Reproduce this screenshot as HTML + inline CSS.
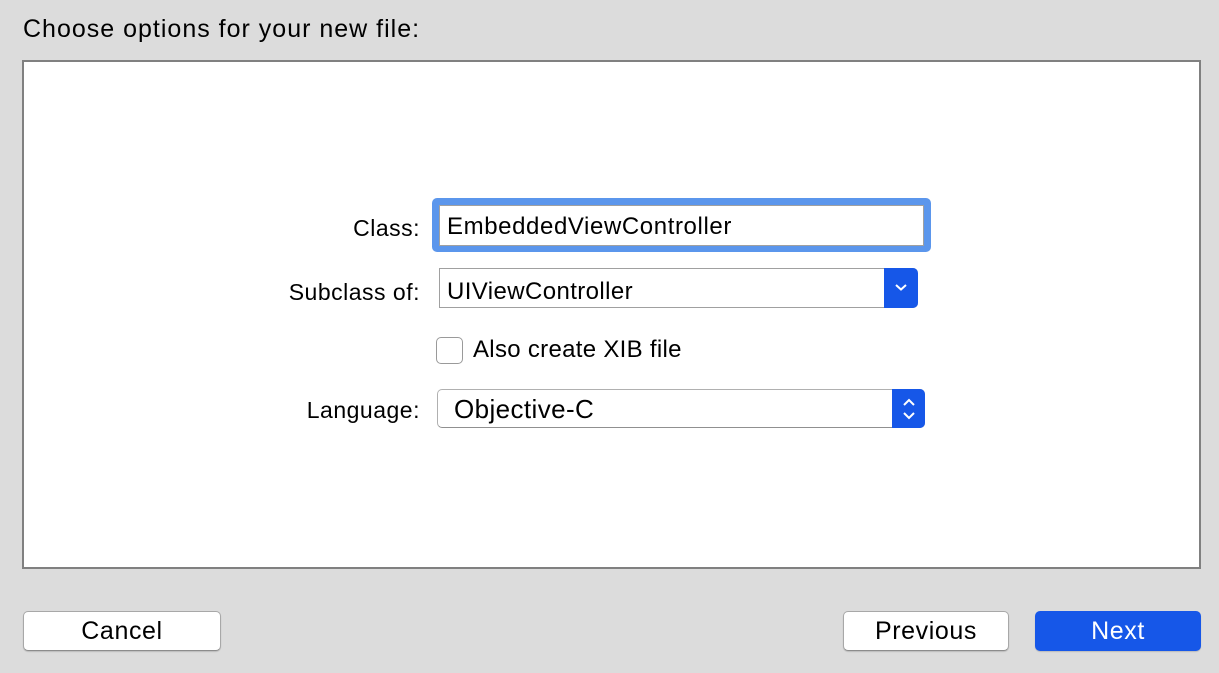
<!DOCTYPE html>
<html><head><style>
body{margin:0;width:1219px;height:673px;background:#dcdcdc;font-family:"Liberation Sans",sans-serif;position:relative;overflow:hidden;color:#000}
.a{position:absolute}
.t{position:absolute;white-space:nowrap;line-height:1}
.lbl{position:absolute;font-size:23px;letter-spacing:0.5px;white-space:nowrap;line-height:1;text-align:right;right:799px}
.btn{position:absolute;background:#fff;border:1px solid #a8a8a8;border-bottom-color:#8c8c8c;border-radius:5px;box-sizing:border-box;font-size:25px;letter-spacing:0.6px;text-align:center;line-height:38px;box-shadow:0 1px 1px rgba(0,0,0,.15)}
</style></head><body>
<div class="t" style="left:23px;top:17px;font-size:25px;letter-spacing:1px">Choose options for your new file:</div>
<div class="a" style="left:22px;top:60px;width:1179px;height:509px;background:#fff;border:2px solid #808080;box-sizing:border-box"></div>

<div class="lbl" style="top:217px">Class:</div>
<div class="a" style="left:432px;top:198px;width:499px;height:54px;background:#5b96ec;border-radius:5px"></div>
<div class="a" style="left:439px;top:205px;width:485px;height:41px;background:#fff;border:1px solid #a0a0a0;box-sizing:border-box"></div>
<div class="t" style="left:447px;top:215px;font-size:24px;letter-spacing:0.6px">EmbeddedViewController</div>

<div class="lbl" style="top:281px">Subclass of:</div>
<div class="a" style="left:439px;top:268px;width:479px;height:40px;background:#fff;border:1px solid #a0a0a0;border-right:none;box-sizing:border-box;border-radius:0 5px 5px 0"></div>
<div class="a" style="left:884px;top:268px;width:34px;height:40px;background:#1657e8;border-radius:0 5px 5px 0"></div>
<svg class="a" style="left:893px;top:281px" width="16" height="12"><path d="M3 4 L8 8.5 L13 4" stroke="#fff" stroke-width="2" fill="none"/></svg>
<div class="t" style="left:447px;top:280px;font-size:24px;letter-spacing:0.4px">UIViewController</div>

<div class="a" style="left:436px;top:337px;width:27px;height:27px;background:#fff;border:1px solid #9a9a9a;border-radius:5px;box-sizing:border-box"></div>
<div class="t" style="left:473px;top:338px;font-size:24px;letter-spacing:0.3px">Also create XIB file</div>

<div class="lbl" style="top:399px">Language:</div>
<div class="a" style="left:437px;top:389px;width:488px;height:39px;background:#fff;border:1px solid #b0b0b0;border-bottom-color:#909090;box-sizing:border-box;border-radius:5px"></div>
<div class="a" style="left:892px;top:389px;width:33px;height:39px;background:#1657e8;border-radius:0 5px 5px 0"></div>
<svg class="a" style="left:900px;top:393px" width="18" height="32"><path d="M4 12 L9 7 L14 12 M4 20 L9 25 L14 20" stroke="#fff" stroke-width="2" fill="none"/></svg>
<div class="t" style="left:454px;top:396px;font-size:26px;letter-spacing:0.4px">Objective-C</div>

<div class="btn" style="left:23px;top:611px;width:198px;height:40px">Cancel</div>
<div class="btn" style="left:843px;top:611px;width:166px;height:40px">Previous</div>
<div class="btn" style="left:1035px;top:611px;width:166px;height:40px;background:#1657e8;border-color:#1657e8;color:#fff">Next</div>
</body></html>
